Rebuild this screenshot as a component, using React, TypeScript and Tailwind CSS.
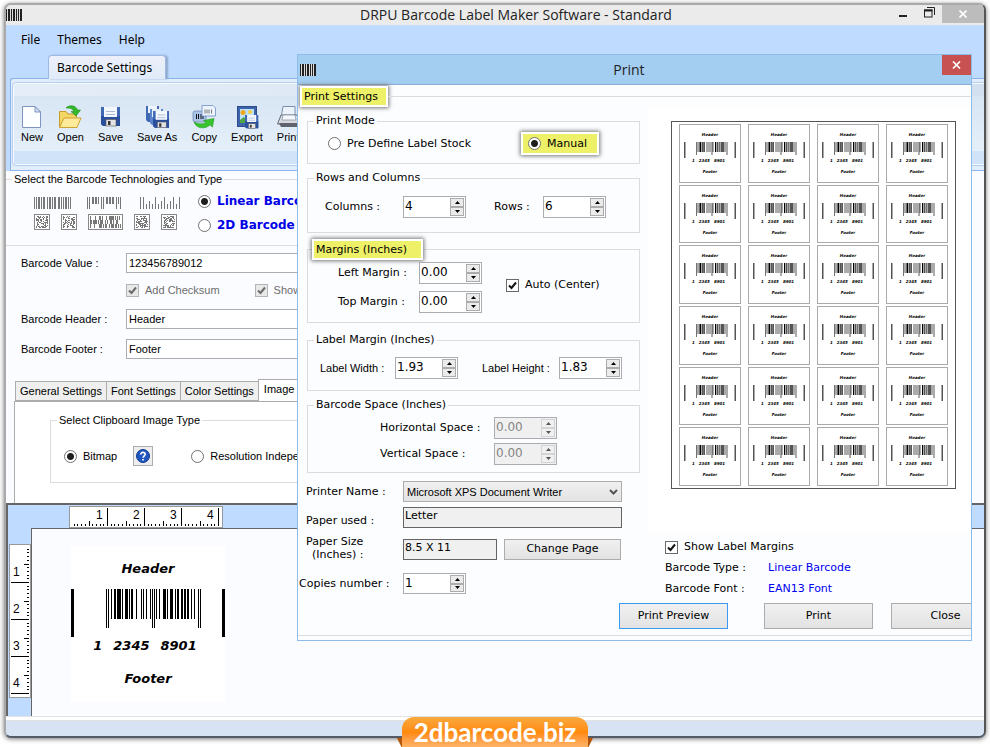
import type { ReactNode } from "react";
import { useId } from "react";

const verdana = "font-['DejaVu_Sans',sans-serif]";
const arial = "font-['Liberation_Sans',sans-serif]";

/* x, width, full height? */
const BARS: [number, number, boolean][] = [
  [0, 1, true], [2, 1, true], [5, 1, false], [8, 2, false], [11, 4, false], [16, 1, false],
  [19, 3, false], [23, 1, false], [25, 2, false], [30, 1, false], [35, 1, false], [37, 1, false],
  [40, 1, false], [44, 1, false], [46, 1, true], [48, 1, true], [50, 1, false], [53, 1, false],
  [57, 3, false], [61, 1, false], [64, 3, false], [69, 1, false], [71, 2, false], [75, 2, false],
  [78, 2, false], [81, 2, false], [85, 1, false], [88, 1, false], [92, 1, true], [94, 1, true],
];

function BarcodeArt({ className }: { className: string }) {
  return (
    <svg viewBox="0 0 154 48" className={className} aria-hidden="true">
      <rect x="0" y="0" width="3" height="48" />
      <rect x="151" y="0" width="3" height="48" />
      {BARS.map(([x, w, full]) => (
        <rect key={x} x={x + 35} y="0" width={w} height={full ? 39 : 30} />
      ))}
    </svg>
  );
}

function AppMark() {
  return (
    <svg width="16" height="12" viewBox="0 0 16 12" aria-hidden="true" className="shrink-0">
      <rect width="16" height="12" fill="#ddd" />
      {[[0, 1], [2, 2], [5, 1], [7, 2], [10, 1], [12, 1], [14, 2]].map(([x, w]) => (
        <rect key={x} x={x} width={w} height="12" fill="#222" />
      ))}
    </svg>
  );
}

function Radio({ name, label, checked, className = "" }: { name: string; label: string; checked?: boolean; className?: string }) {
  return (
    <label className={`flex items-center gap-[6px] whitespace-nowrap ${className}`}>
      <input
        type="radio"
        name={name}
        defaultChecked={checked}
        className="size-[13px] shrink-0 appearance-none rounded-full border border-[#707070] bg-white checked:bg-[radial-gradient(circle,#1e1e1e_0_3px,#ffffff00_4px)]"
      />
      {label}
    </label>
  );
}

function Check({ label, disabled, className = "" }: { label: string; disabled?: boolean; className?: string }) {
  return (
    <label className={`flex items-center gap-[6px] whitespace-nowrap ${disabled ? "text-[#6d6d6d]" : ""} ${className}`}>
      <span className="grid shrink-0">
        <input
          type="checkbox"
          defaultChecked
          disabled={disabled}
          className="col-start-1 row-start-1 size-[13px] appearance-none border border-[#6a6a6a] bg-white disabled:border-[#b4b4b4] disabled:bg-[#e8e8e8]"
        />
        <svg viewBox="0 0 13 13" className="pointer-events-none col-start-1 row-start-1 size-[13px]" aria-hidden="true">
          <path d="M3 6.5 L5.5 9 L10 3.5" fill="none" stroke={disabled ? "#6a6a6a" : "#111"} strokeWidth="2" />
        </svg>
      </span>
      {label}
    </label>
  );
}

function Spinner({ id, value, disabled, tall = true }: { id: string; value: string; disabled?: boolean; tall?: boolean }) {
  const tone = disabled ? "border-[#d4d4d4] bg-[#f0f0f0] text-[#555]" : "border-[#acacac] bg-[#ebebeb] text-black";
  const button = `grid h-[9px] w-[14px] place-items-center border ${tone}`;
  return (
    <span className={`flex w-[63px] shrink-0 border border-[#abadb3] py-px pr-px ${tall ? "h-[22px]" : "h-[21px]"} ${disabled ? "bg-[#f0f0f0]" : "bg-white"}`}>
      <input
        id={id}
        defaultValue={value}
        disabled={disabled}
        className="w-full min-w-0 flex-1 pb-[2px] pl-px text-[12px] leading-[16px] outline-none disabled:text-[#858585]"
      />
      <span className="flex flex-col">
        <button type="button" tabIndex={-1} disabled={disabled} aria-label="Increase" className={button}>
          <svg width="5" height="3" viewBox="0 0 5 3"><path d="M2.5 0 L5 3 H0 Z" fill="currentColor" /></svg>
        </button>
        <button type="button" tabIndex={-1} disabled={disabled} aria-label="Decrease" className={button}>
          <svg width="5" height="3" viewBox="0 0 5 3"><path d="M0 0 H5 L2.5 3 Z" fill="currentColor" /></svg>
        </button>
      </span>
    </span>
  );
}

function SpinField({ label, value, labelClass, disabled, className = "" }: { label: string; value: string; labelClass: string; disabled?: boolean; className?: string }) {
  const id = useId();
  return (
    <div className={`flex items-center ${className}`}>
      <label htmlFor={id} className={`shrink-0 whitespace-nowrap ${labelClass}`}>{label}</label>
      <Spinner id={id} value={value} disabled={disabled} />
    </div>
  );
}

function Group({ title, className = "", children }: { title: string; className?: string; children: ReactNode }) {
  return (
    <fieldset className={`min-w-0 border border-[#dcdcdc] ${className}`}>
      <legend className="ml-[6px] px-[2px] leading-[16px]">{title}</legend>
      {children}
    </fieldset>
  );
}

const highlight = "border-2 border-white bg-[#eef068] shadow-[0_0_4px_1px_#777]";

/* ---------- toolbar icons ---------- */

function Floppy({ x = 0, y = 0, s = 1 }: { x?: number; y?: number; s?: number }) {
  return (
    <g transform={`translate(${x} ${y}) scale(${s})`}>
      <path d="M0 0 H19 V19 H2 L0 17 Z" fill="#3f68b5" />
      <path d="M0 9 H19 V19 H2 L0 17 Z" fill="#2a4f9c" />
      <rect x="3" y="0" width="13" height="10" fill="#f4f8fd" />
      <path d="M5 4.5 H14 M5 7.5 H14" stroke="#a9bbd4" />
      <rect x="5" y="12.500" width="10" height="6.500" fill="#e3e3e3" stroke="#555" strokeWidth=".6" />
      <rect x="7" y="14" width="2.500" height="4" fill="#333" />
    </g>
  );
}

const NewIcon = (
  <>
    <path d="M2.500 1.500 H15 L20.500 7 V22.500 H2.500 Z" fill="#fdfeff" stroke="#7f95c0" />
    <path d="M15 1.500 V7 H20.500 Z" fill="#d5e0f2" stroke="#7f95c0" />
  </>
);
const OpenIcon = (
  <>
    <path d="M1.500 22 V6.500 H8 L10 9 H18.500 V22 Z" fill="#f4d665" stroke="#c79a2c" />
    <path d="M1.500 22.500 L6 13 H23 L19 22.500 Z" fill="#fdea9b" stroke="#d0a232" />
    <path d="M8 3 C11 -.5 18 0 19.500 5 H22.500 L18 11 L13 6.500 H16 C15 3.500 11 2.500 8 3 Z" fill="#35b92c" stroke="#1f8d1e" strokeWidth=".6" />
  </>
);
const SaveAsIcon = (
  <>
    <path d="M1 1 H14 V17 H3 L1 15 Z" fill="#3f68b5" />
    <rect x="3" y="1" width="9" height="7" fill="#eff5fc" />
    <path d="M5 4 H18 V20 H7 L5 18 Z" fill="#5b86cf" />
    <rect x="7" y="4" width="9" height="8" fill="#e6effa" />
    <Floppy x={8} y={6} s={0.88} />
  </>
);
const CopyIcon = (
  <>
    <rect x="1" y="6" width="13" height="11" rx="2" fill="#a9c4e6" stroke="#6683b0" strokeWidth=".7" />
    <path d="M4.500 9 V14 M6.500 9 V14 M9 9 V14 M11 9 V14" stroke="#111" />
    <path d="M10 .5 H21 L23.500 3 V11 H10 Z" fill="#edf4fd" stroke="#6d8fc9" strokeWidth=".8" />
    <path d="M13 4.500 V8.500 M15 4.500 V8.500 M17 4.500 V8.500 M19.500 4.500 V8.500" stroke="#777" />
    <path d="M2 17 C6 19 11 19.500 14 17.500 L11.500 15.500 L22 13.500 L20.500 22 L18 20 C12 25 4 23 2 17 Z" fill="#39c42f" stroke="#209a20" strokeWidth=".6" />
  </>
);
const ExportIcon = (
  <>
    <rect x="2.500" y="1.500" width="19" height="20" fill="#3d64ab" stroke="#2c4c8c" />
    <rect x="5" y="4" width="14" height="14" fill="#bfe2fb" />
    <circle cx="8" cy="7.500" r="2.500" fill="#f0a71c" />
    <path d="M5 18 V15 L9 12 L13 18 Z" fill="#4aa542" />
    <circle cx="15" cy="7" r="2" fill="#f5cf3e" />
    <Floppy x={10} y={10} s={0.7} />
  </>
);
const PrintIcon = (
  <>
    <path d="M7 1.500 H19 V13 H5 Z" fill="#eaf2fb" stroke="#7b8fae" />
    <path d="M1.500 19 L5 10 H21 L24 19 Z" fill="#d7dbe1" stroke="#666c77" />
    <path d="M7 10 H19 L20 15 H6 Z" fill="#f4f7fb" stroke="#8590a0" strokeWidth=".7" />
    <path d="M3 18 H23 L21 22 H5 Z" fill="#60656d" />
  </>
);

const TOOLS: [string, ReactNode][] = [
  ["New", NewIcon],
  ["Open", OpenIcon],
  ["Save", <g key="save"><Floppy x={3} y={2} /></g>],
  ["Save As", SaveAsIcon],
  ["Copy", CopyIcon],
  ["Export", ExportIcon],
  ["Print", PrintIcon],
];

/* ---------- small grey symbology samples ---------- */

/* each bar is [x, width, top, height] */
function Strip({ bars }: { bars: number[][] }) {
  return (
    <svg width="40" height="12" viewBox="0 0 40 12" fill="#777" aria-hidden="true">
      {bars.map(([x, w, y, h]) => (
        <rect key={x} x={x} y={y} width={w} height={h} />
      ))}
    </svg>
  );
}

const PLAIN = [[0, 1], [2, 1], [4, 2], [7, 1], [9, 2], [13, 1], [15, 2], [18, 1], [20, 2], [24, 2], [27, 1], [29, 1], [31, 2], [34, 1], [36, 1]].map(([x, w]) => [x, w, 0, 12]);
const HANGING = [[0, 1, 12], [2, 1, 12], [5, 2, 7], [8, 2, 7], [11, 1, 7], [14, 1, 12], [16, 1, 12], [19, 2, 7], [22, 2, 7], [25, 2, 7], [29, 1, 12], [31, 1, 7], [33, 1, 12]].map(([x, w, h]) => [x, w, 0, h]);
const STANDING = [[0, 12], [3, 12], [6, 5], [9, 8], [12, 5], [15, 12], [18, 5], [21, 8], [24, 12], [27, 5], [30, 8], [33, 12], [36, 5], [39, 12]].map(([x, h]) => [x, 1, 12 - h, h]);

function Matrix({ seed, wide }: { seed: number; wide?: boolean }) {
  const cols = wide ? 31 : 12;
  const cells: ReactNode[] = [];
  let state = seed * 7919;
  const next = () => {
    state = (state * 1103515245 + 12345) % 2147483648;
    return state / 2147483648;
  };
  for (let x = 0; x < cols; x++)
    for (let y = 0; y < 12; y += wide ? 4 : 1)
      if (next() < 0.5) cells.push(<rect key={`${x}-${y}`} x={x + 2} y={y + 2} width="1" height={wide ? 4 : 1} />);
  return (
    <svg width={cols + 4} height="16" viewBox={`0 0 ${cols + 4} 16`} fill="#777" aria-hidden="true">
      <rect x=".5" y=".5" width={cols + 3} height="15" fill="#fff" stroke="#888" />
      {cells}
    </svg>
  );
}

/* ---------- rulers ---------- */

function Ruler({ vertical }: { vertical?: boolean }) {
  const ticks = Array.from({ length: 40 }, (_, i) => i + 1);
  const numbers = [1, 2, 3, 4];
  return (
    <svg width={vertical ? 22 : 154} height={vertical ? 154 : 22} className="block bg-white outline outline-[#999] -outline-offset-1" aria-hidden="true">
      {ticks.map((i) => {
        const p = Math.round(i * 3.7) + 1;
        const len = i % 10 === 0 ? 18 : i % 5 === 0 ? 5 : 2;
        return vertical ? (
          <rect key={i} x={20 - len} y={p} width={len} height="1" />
        ) : (
          <rect key={i} x={p} y={20 - len} width="1" height={len} />
        );
      })}
      {numbers.map((n) => (
        <text key={n} x={vertical ? 4 : n * 37 - 10} y={vertical ? n * 37 - 5 : 13} className="font-['Liberation_Sans',sans-serif] text-[12px]">
          {n}
        </text>
      ))}
    </svg>
  );
}

function FieldRow({ label, value }: { label: string; value: string }) {
  const id = useId();
  return (
    <div className="flex items-center">
      <label htmlFor={id} className="w-[105px] shrink-0">{label}</label>
      <input id={id} defaultValue={value} className="h-[20px] min-w-0 flex-1 border border-[#abadb3] bg-white pl-[2px] outline-none" />
    </div>
  );
}

function MainForm() {
  return (
    <div className={`bg-[#fbfcff] pr-[16px] text-[11px] leading-[14px] ${arial}`}>
      <Group title="Select the Barcode Technologies and Type" className="border-l-0">
        <div className="flex items-center gap-[18px] pt-[7px] pb-[13px] pl-[28px]">
          <div className="grid gap-[5px] pt-px">
            <div className="flex gap-[13px]">
              <Strip bars={PLAIN} />
              <Strip bars={HANGING} />
              <Strip bars={STANDING} />
            </div>
            <div className="flex gap-[11px]">
              <Matrix seed={2} />
              <Matrix seed={5} />
              <Matrix seed={1} wide />
              <Matrix seed={4} />
              <Matrix seed={3} />
            </div>
          </div>
          <div className={`grid gap-[10px] text-[12px] font-bold text-[#0000e8] ${verdana}`}>
            <Radio name="technology" label="Linear Barcode" checked />
            <Radio name="technology" label="2D Barcode" />
          </div>
        </div>
      </Group>
      <div className="grid pt-[7px] pl-[15px]">
        <FieldRow label="Barcode Value :" value="123456789012" />
        <div className="flex gap-[35px] pt-[10px] pb-[12px] pl-[105px]">
          <Check label="Add Checksum" disabled />
          <Check label="Show Checksum" disabled />
        </div>
        <FieldRow label="Barcode Header :" value="Header" />
        <div className="pt-[10px]">
          <FieldRow label="Barcode Footer :" value="Footer" />
        </div>
      </div>
      <div role="tablist" className="flex items-end pt-[20px] pl-[9px]">
        {["General Settings", "Font Settings", "Color Settings"].map((t) => (
          <button key={t} type="button" role="tab" aria-selected="false" className="-mr-px h-[20px] border border-[#acacac] bg-[#efefef] px-[4px]">
            {t}
          </button>
        ))}
        <button type="button" role="tab" aria-selected="true" className="h-[22px] border border-b-0 border-[#acacac] bg-white px-[5px] pb-[3px]">
          Image Settings
        </button>
      </div>
      <div className="ml-[8px] border-t border-l border-[#acacac] bg-white pt-[10px] pb-[20px] pl-[35px]">
        <Group title="Select Clipboard Image Type">
          <div className="flex items-center pt-[18px] pb-[16px] pl-[13px]">
            <Radio name="clipboard" label="Bitmap" checked />
            <button type="button" aria-label="Bitmap help" className="mr-[38px] ml-[16px] grid size-[20px] place-items-center border border-[#acacac] bg-[#eee]">
              <svg width="14" height="14" viewBox="0 0 14 14" aria-hidden="true">
                <circle cx="7" cy="7" r="6.500" fill="#1f56c0" stroke="#123b8f" />
                <path d="M4.800 5.400 C4.800 2.600 9.400 2.800 9.200 5.300 C9.100 6.800 7.200 6.900 7.100 8.700 M7 10 V11.600" fill="none" stroke="#fff" strokeWidth="1.700" />
              </svg>
            </button>
            <Radio name="clipboard" label="Resolution Independent" />
          </div>
        </Group>
      </div>
    </div>
  );
}

function Canvas() {
  return (
    <div className="border-t-2 border-l-2 border-[#666] bg-[#bfdbff] pt-px">
      <div className="pl-[61px]">
        <Ruler />
      </div>
      <div className="flex pl-px">
        <div className="pt-[16px]">
          <Ruler vertical />
        </div>
        <div className="flex-1 border-t border-l border-[#666] bg-[#fbfcff] pt-[17px] pb-[14px] pl-[39px]">
          <div className={`flex w-[154px] flex-col items-center bg-white pt-[15px] pb-[15px] text-[13px] leading-[16px] font-bold italic ${verdana}`}>
            <span>Header</span>
            <BarcodeArt className="mt-[12px] h-[48px] w-[154px]" />
            <span className="mt-px flex gap-[11px] pr-[6px]">
              <span>1</span>
              <span>2345</span>
              <span>8901</span>
            </span>
            <span className="mt-[17px]">Footer</span>
          </div>
        </div>
      </div>
    </div>
  );
}

function LabelCell() {
  return (
    <div className="flex flex-col items-center border border-[#aaa] bg-white pt-[7px] text-[4px] leading-[6px] font-bold italic">
      <span>Header</span>
      <BarcodeArt className="mt-[4px] h-[16px] w-[52px]" />
      <span className="flex gap-[4px] pr-[3px]">
        <span>1</span>
        <span>2345</span>
        <span>8901</span>
      </span>
      <span className="mt-[5px]">Footer</span>
    </div>
  );
}

function PrintDialog() {
  const raised = "shrink-0 border bg-linear-to-b from-[#f0f0f0] to-[#e3e3e3]";
  return (
    <section
      role="dialog"
      aria-label="Print"
      className={`absolute top-[54px] right-[18px] left-[297px] overflow-hidden border border-[#8dbce8] bg-[#fcfdff] text-[11px] leading-[14px] ${verdana}`}
    >
      <header className="flex h-[30px] items-center border-b border-[#86aed6] bg-[#a3cdf1] pl-[2px]">
        <AppMark />
        <h2 className="flex-1 text-center font-['Open_Sans',sans-serif] text-[14px] text-[#222]">Print</h2>
        <button type="button" aria-label="Close dialog" className="grid h-[20px] w-[29px] place-items-center self-start bg-[#c75050]">
          <svg width="9" height="8" viewBox="0 0 9 8" aria-hidden="true"><path d="M1 0.500 L8 7.500 M8 0.500 L1 7.500" stroke="#fff" strokeWidth="1.700" /></svg>
        </button>
      </header>

      <div className="flex items-center pt-px pl-[2px]">
        <h3 className={`h-[21px] pr-[8px] pl-[2px] leading-[17px] ${highlight}`}>Print Settings</h3>
        <hr className="flex-1 border-[#dcdcdc]" />
      </div>

      <div className="flex">
        <div className="w-[342px] shrink-0 pt-[6px]">
          <div className="grid gap-[6px] pl-[9px]">
            <Group title="Print Mode">
              <div className="flex items-center justify-between pt-[3px] pr-[40px] pb-[8px] pl-[20px]">
                <Radio name="mode" label="Pre Define Label Stock" />
                <Radio name="mode" label="Manual" checked className={`h-[23px] pr-[10px] pl-[5px] ${highlight}`} />
              </div>
            </Group>
            <Group title="Rows and Columns">
              <div className="flex pt-[10px] pb-[14px] pl-[17px]">
                <SpinField label="Columns :" value="4" labelClass="w-[78px]" />
                <SpinField label="Rows :" value="6" labelClass="w-[49px]" className="pl-[28px]" />
              </div>
            </Group>
            <fieldset className="min-w-0 border border-[#dcdcdc]">
              <legend className={`ml-[4px] h-[21px] pr-[14px] pl-[2px] leading-[17px] ${highlight}`}>Margins (Inches)</legend>
              <div className="flex items-center gap-[24px] pt-[2px] pb-[9px] pl-[30px]">
                <div className="grid gap-[7px]">
                  <SpinField label="Left Margin :" value="0.00" labelClass="w-[81px]" />
                  <SpinField label="Top Margin :" value="0.00" labelClass="w-[81px]" />
                </div>
                <Check label="Auto (Center)" className="pb-[5px]" />
              </div>
            </fieldset>
            <Group title="Label Margin (Inches)" className="mt-[3px]">
              <div className="flex pt-[9px] pb-[11px] pl-[12px]">
                <SpinField label="Label Width :" value="1.93" labelClass="w-[75px] font-['Liberation_Sans',sans-serif]" />
                <SpinField label="Label Height :" value="1.83" labelClass="w-[77px] font-['Liberation_Sans',sans-serif]" className="pl-[24px]" />
              </div>
            </Group>
            <Group title="Barcode Space (Inches)">
              <div className="grid gap-[4px] pt-[4px] pb-[7px] pl-[72px]">
                <SpinField label="Horizontal Space :" value="0.00" labelClass="w-[114px]" disabled />
                <SpinField label="Vertical Space :" value="0.00" labelClass="w-[114px]" disabled />
              </div>
            </Group>
          </div>
          <div className="grid grid-cols-[105px_219px] items-center pt-[8px]">
            <label htmlFor="printer" className="pl-[8px]">Printer Name :</label>
            <div className="relative">
              <select id="printer" className="h-[21px] w-full appearance-none border border-[#acacac] bg-linear-to-b from-[#f0f0f0] to-[#e3e3e3] pl-[3px] font-['Liberation_Sans',sans-serif] text-[11px]">
                <option>Microsoft XPS Document Writer</option>
              </select>
              <svg width="9" height="6" viewBox="0 0 9 6" className="pointer-events-none absolute top-[8px] right-[4px]" aria-hidden="true">
                <path d="M1 1 L4.500 4.500 L8 1" fill="none" stroke="#555" strokeWidth="2" />
              </svg>
            </div>
            <label htmlFor="paper" className="pt-[12px] pl-[8px]">Paper used :</label>
            <input id="paper" readOnly defaultValue="Letter" className="mt-[4px] h-[21px] border border-[#646464] bg-[#f0f0f0] pb-[3px] pl-px outline-none" />
            <label htmlFor="size" className="pt-[7px] pl-[8px] leading-[13px]">
              Paper Size
              <br />
              <span className="pl-[6px]">(Inches) :</span>
            </label>
            <div className="flex items-center gap-[7px] pt-[9px]">
              <input id="size" readOnly defaultValue="8.5 X 11" className="h-[21px] w-[94px] border border-[#646464] bg-[#f0f0f0] pb-[3px] pl-px outline-none" />
              <button type="button" className={`h-[21px] w-[117px] border-[#acacac] ${raised}`}>Change Page</button>
            </div>
            <label htmlFor="copies" className="pt-[12px] pl-px">Copies number :</label>
            <div className="pt-[12px]">
              <Spinner id="copies" value="1" tall={false} />
            </div>
          </div>
        </div>

        <div className="ml-[8px] flex min-w-0 flex-1 flex-col">
          <div className="bg-white pt-[14px] pr-[15px] pb-[44px] pl-[23px]">
            <div className="border border-[#555] bg-white px-[7px] py-[2px]">
              <div className="grid h-[362px] grid-cols-4 grid-rows-6 gap-x-[7px] gap-y-[2px]">
                {Array.from({ length: 24 }, (_, i) => (
                  <LabelCell key={i} />
                ))}
              </div>
            </div>
          </div>
          <div className="pt-[7px] pl-[17px]">
            <Check label="Show Label Margins" />
            <dl className="grid grid-cols-[103px_1fr] gap-y-[7px] pt-[7px]">
              <dt>Barcode Type :</dt>
              <dd className="text-[#0000f0]">Linear Barcode</dd>
              <dt>Barcode Font :</dt>
              <dd className="text-[#0000f0]">EAN13 Font</dd>
            </dl>
          </div>
        </div>
      </div>

      <div className="-mr-[29px] flex justify-end pt-[7px]">
        <button type="button" className={`h-[26px] w-[109px] border-[#3c98f0] ${raised}`}>Print Preview</button>
        <button type="button" className={`ml-[36px] h-[26px] w-[109px] border-[#acacac] ${raised}`}>Print</button>
        <button type="button" className={`ml-[18px] h-[26px] w-[109px] border-[#acacac] ${raised}`}>Close</button>
      </div>
      <hr className="mt-[6px] mb-[4px] border-[#dcdcdc]" />
    </section>
  );
}

export default function App() {
  return (
    <div className="relative bg-white pt-[3px] pr-[4px] pb-[10px] pl-[4px] text-black">
      <main className="overflow-hidden rounded-[7px] border-2 border-[#a9a9a9] border-r-[#555] border-b-[#555b66] bg-[#bfdbff] shadow-[0_1px_5px_#777]">
        <header className="flex h-[20px] items-center bg-[#ebebeb]">
          <AppMark />
          <h1 className="flex-1 pl-[120px] text-center font-['Open_Sans',sans-serif] text-[14px] leading-[18px] text-[#222]">
            DRPU Barcode Label Maker Software - Standard
          </h1>
          <button type="button" aria-label="Minimize" className="grid h-full w-[26px] place-items-center">
            <svg width="8" height="10" viewBox="0 0 8 10" aria-hidden="true"><rect y="5" width="8" height="2" fill="#222" /></svg>
          </button>
          <button type="button" aria-label="Restore" className="grid h-full w-[26px] place-items-center pb-[5px]">
            <svg width="11" height="11" viewBox="0 0 11 11" fill="none" stroke="#222" aria-hidden="true">
              <path d="M3 .5 H10.500 V8" />
              <rect x=".5" y="3" width="7.500" height="7" />
              <path d="M0 3.500 H8.500" strokeWidth="2" />
            </svg>
          </button>
          <button type="button" aria-label="Close" className="grid h-[18px] w-[42px] place-items-center self-start bg-[#bcbcbc]">
            <svg width="8" height="8" viewBox="0 0 8 8" aria-hidden="true"><path d="M.5 .5 L7.500 7.500 M7.500 .5 L.5 7.500" stroke="#fff" strokeWidth="1.600" /></svg>
          </button>
        </header>

        <nav className="flex gap-[17px] pt-[7px] pl-[15px] font-['Noto_Sans',sans-serif] text-[12px] leading-[16px]">
          <button type="button">File</button>
          <button type="button">Themes</button>
          <button type="button">Help</button>
        </nav>

        <div className="flex pt-[7px] pl-[42px]">
          <button type="button" className="-mb-px h-[24px] rounded-t-[4px] border border-b-0 border-[#9db9e6] bg-linear-to-b from-[#edf0fb] to-[#e0ebf8] pr-[13px] pl-[8px] font-['Noto_Sans',sans-serif] text-[12px] shadow-[2px_0_2px_#8fa9c8]">
            Barcode Settings
          </button>
        </div>
        <div className="ml-[4px] rounded-tl-[3px] border-t border-b border-l border-[#8ab4ea] bg-[#e1edfb] pt-[4px] pb-[5px] pl-[2px]">
          <div className="rounded-l-[3px] border border-r-0 border-[#f7fbff] bg-linear-to-r from-[#e4edf8] to-[#d3e0ef] outline outline-[#b5cfee]">
            <div className="mt-[12px] flex gap-[14px] bg-linear-to-b from-[#d8e5f3] to-[#e4eff9] pt-[9px] pb-[7px] pl-[7px]">
              {TOOLS.map(([name, icon]) => (
                <button key={name} type="button" className={`flex flex-col items-center gap-px text-[11px] leading-[14px] whitespace-nowrap ${arial}`}>
                  <svg width="24" height="24" viewBox="0 0 24 24" className="-mx-2" aria-hidden="true">{icon}</svg>
                  {name}
                </button>
              ))}
            </div>
            <div className="h-[13px] bg-[#d0e3f9]" />
          </div>
        </div>

        <MainForm />
        <Canvas />
        <div className="h-[5px] border-y border-[#e2e2e2] bg-white" />
        <footer className="h-[15px] bg-[#d7e2f2]" />
      </main>

      <PrintDialog />

      <a
        href="#site"
        className="absolute bottom-0 left-1/2 flex h-[31px] w-[186px] -translate-x-1/2 items-center justify-center rounded-t-[12px] bg-linear-to-b from-[#f9a93c] via-[#ff8a0a] to-[#fdb668] font-['Lato',sans-serif] text-[26px] font-bold text-white"
      >
        2dbarcode.biz
        <svg viewBox="0 0 196 10" className="absolute bottom-0 -left-[5px] h-[10px] w-[196px]" aria-hidden="true">
          <path d="M0 0 H5 V10 Z M191 0 H196 L191 10 Z" fill="#b4560a" />
        </svg>
      </a>
    </div>
  );
}
